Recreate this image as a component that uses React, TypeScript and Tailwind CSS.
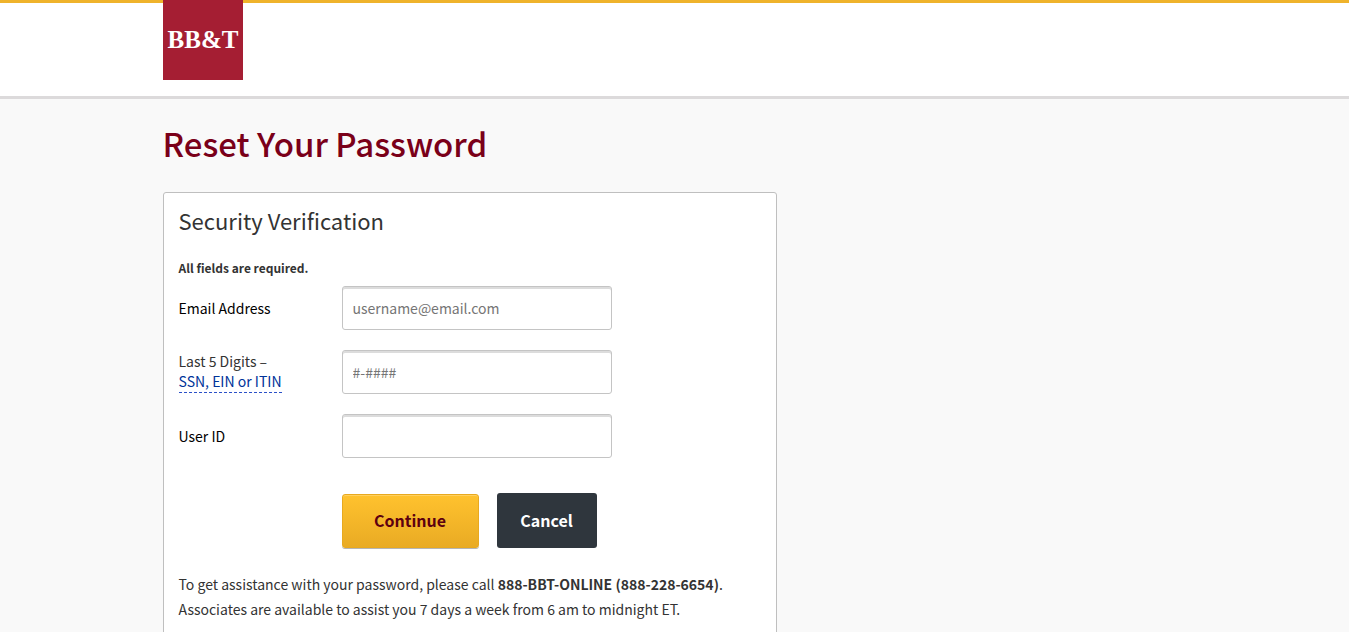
import type { InputHTMLAttributes, ReactNode } from 'react';

function Logo() {
  return (
    <a href="#" aria-label="BB&T" className="block size-20 bg-[#a51e33]">
      <svg viewBox="0 0 80 80" className="size-full" aria-hidden="true">
        <text
          x="40"
          y="48"
          textAnchor="middle"
          fill="#fff"
          className="font-['Liberation_Serif',serif] text-[25px] font-bold"
        >
          BB&amp;T
        </text>
      </svg>
    </a>
  );
}

type FieldProps = InputHTMLAttributes<HTMLInputElement> & { id: string; label: ReactNode };

function Field({ id, label, ...input }: FieldProps) {
  return (
    <div className="flex items-center">
      <label htmlFor={id} className="w-[163px] shrink-0 leading-5 text-black">
        {label}
      </label>
      <input
        id={id}
        {...input}
        className="h-11 w-[270px] rounded-[3px] border border-[#c4c4c4] bg-white px-[10px] shadow-[inset_0_2px_0_#dcdcdc] placeholder:text-[#757575]"
      />
    </div>
  );
}

export default function App() {
  return (
    <div className="min-h-screen bg-[#f9f9f9] font-['Noto_Sans_CJK_SC',sans-serif] text-[14px] text-[#333]">
      <header className="border-t-[3px] border-b-[3px] border-t-[#efb32b] border-b-[#dcdadb] bg-white">
        <div className="mx-auto -mt-[3px] max-w-[1024px] pb-4">
          <Logo />
        </div>
      </header>
      <main className="mx-auto max-w-[1024px] pt-[22px]">
        <h1 className="text-[33px] leading-[44px] font-medium text-[#7a0019]">Reset Your Password</h1>
        <section className="mt-[27px] w-3/5 rounded-[3px] border border-[#bfbfbf] bg-white px-[15px] pt-[10px] pb-8">
          <h2 className="text-[22px] leading-[34px]">Security Verification</h2>
          <form onSubmit={(e) => e.preventDefault()}>
            <p className="mt-[21px] mb-2 text-[12px] leading-5 font-bold">All fields are required.</p>
            <div className="flex flex-col gap-5">
              <Field id="email" label="Email Address" type="email" placeholder="username@email.com" />
              <Field
                id="digits"
                type="text"
                placeholder="#-####"
                label={
                  <>
                    <span className="block text-[#333]">Last 5 Digits –</span>
                    <a
                      href="#"
                      className="inline-block border-b border-dashed border-b-[#2a50c8] pb-px text-[#003399]"
                    >
                      SSN, EIN or ITIN
                    </a>
                  </>
                }
              />
              <Field id="user" label="User ID" type="text" />
            </div>
            <div className="mt-[35px] ml-[163px] flex gap-[18px] text-[16px] font-bold">
              <button
                type="submit"
                className="mt-px h-[54px] w-[137px] rounded-[3px] border border-[#e8a91f] bg-linear-to-b from-[#ffc22e] to-[#e9ab24] pb-[2px] text-[#5c0010] shadow-[inset_0_1px_0_#ffd060,0_1px_0_#b5b5b5]"
              >
                Continue
              </button>
              <button type="button" className="h-[55px] w-[100px] rounded-[3px] bg-[#2f363d] pb-[2px] text-white">
                Cancel
              </button>
            </div>
          </form>
          <p className="mt-6 leading-[25px]">
            To get assistance with your password, please call <strong>888-BBT-ONLINE (888-228-6654)</strong>.
            <br />
            Associates are available to assist you 7 days a week from 6 am to midnight ET.
          </p>
        </section>
      </main>
    </div>
  );
}
